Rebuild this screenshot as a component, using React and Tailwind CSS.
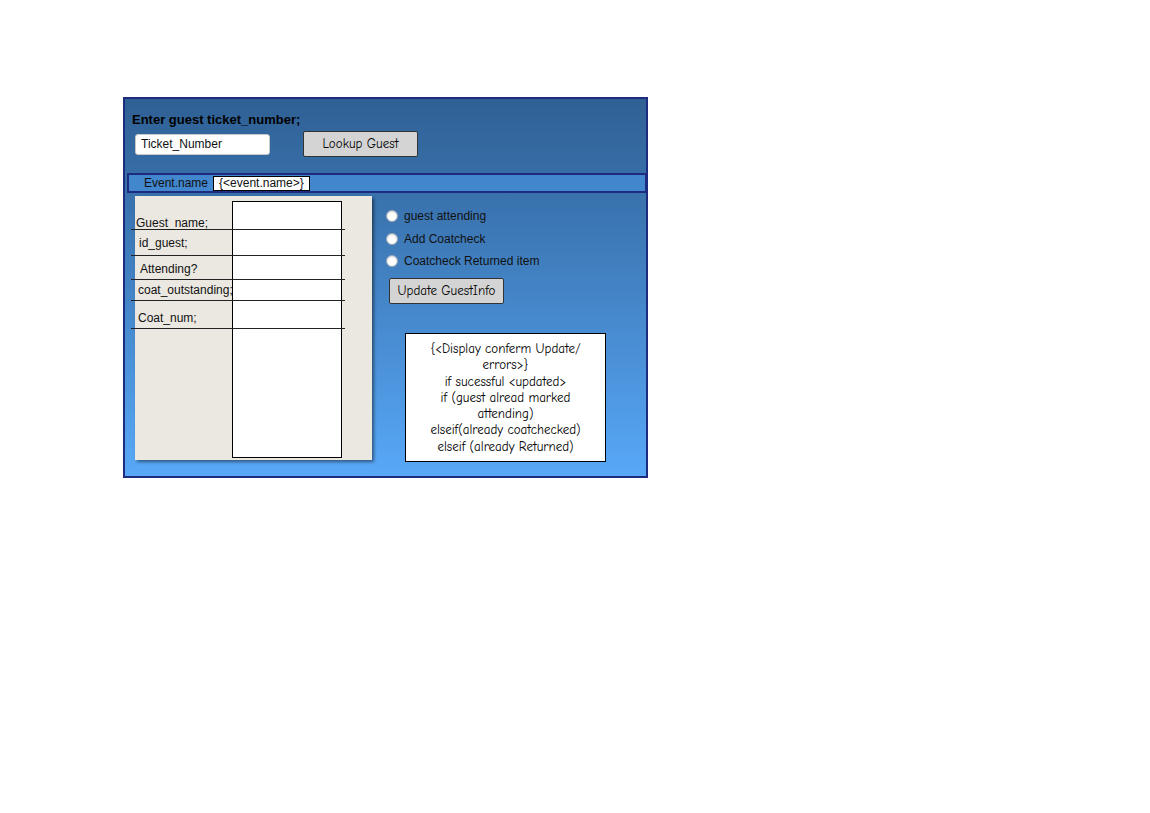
import React from "react";

const comic = "font-['Comic_Sans_MS','Comic_Neue','Lato',sans-serif]";
const arial = "font-['Liberation_Sans',Arial,sans-serif]";

function Row({ label, h, pt, pl, first }) {
  return (
    <div className={`flex w-[214px] -ml-[4px] border-b border-[#222] ${h}`}>
      <div className={`w-[101px] ${pt} ${pl} text-[12px] leading-[14px] text-[#111] whitespace-nowrap`}>{label}</div>
      <div className={`w-[110px] bg-white border-x border-black ${first ? "border-t" : ""}`} />
    </div>
  );
}

function Radio({ label }) {
  return (
    <div className="flex items-center h-[16px]">
      <span className="w-[12px] h-[12px] rounded-full bg-white border border-[#9aa7b5] shadow-[inset_0_1px_2px_rgba(0,0,0,0.15)]" />
      <span className="ml-[6px] text-[12px] text-[#111]">{label}</span>
    </div>
  );
}

export default function App() {
  return (
    <div className={`w-[1150px] h-[813px] bg-white pl-[123px] pt-[97px] ${arial}`}>
      <div className="w-[525px] h-[381px] border-2 border-[#1d2c7e] bg-gradient-to-b from-[#2f6094] to-[#58a8f8] flex flex-col">
        <div className="pl-[7px] mt-[13px] text-[13px] leading-[16px] font-bold text-black">Enter guest ticket_number;</div>
        <div className="flex items-center mt-[3px] ml-[10px] h-[26px]">
          <div className="w-[135px] h-[21px] bg-white rounded-[3px] border border-[#c8c8c8] flex items-center pl-[5px] text-[12px] text-[#111]">Ticket_Number</div>
          <div className={`ml-[33px] w-[115px] h-[26px] bg-[#d4d4d4] border border-[#333] rounded-[2px] flex items-center justify-center text-[13px] font-medium text-black ${comic}`}>Lookup Guest</div>
        </div>
        <div className="mt-[16px] ml-[2px] -mr-[1px] h-[20px] bg-[#4286cd] border-2 border-[#1d2c7e] flex items-center">
          <span className="ml-[15px] text-[12px] text-[#111]">Event.name</span>
          <span className="ml-[5px] h-[15px] bg-white border border-black px-[5px] text-[12px] leading-[13px] text-[#111]">{"{<event.name>}"}</span>
        </div>
        <div className="flex mt-[3px]">
          <div className="ml-[10px] w-[237px] h-[264px] bg-[#ebe8e2] shadow-[2px_2px_3px_rgba(0,0,0,0.45)] pt-[5px] flex flex-col">
            <Row label="Guest_name;" h="h-[29px]" pt="pt-[15px]" pl="pl-[5px]" first />
            <Row label="id_guest;" h="h-[26px]" pt="pt-[6px]" pl="pl-[8px]" />
            <Row label="Attending?" h="h-[24px]" pt="pt-[6px]" pl="pl-[9px]" />
            <Row label="coat_outstanding;" h="h-[21px]" pt="pt-[3px]" pl="pl-[7px]" />
            <Row label="Coat_num;" h="h-[28px]" pt="pt-[10px]" pl="pl-[7px]" />
            <div className="ml-[97px] w-[110px] h-[129px] bg-white border-x border-b border-black" />
          </div>
          <div className="ml-[14px] pt-[12px] flex flex-col">
            <Radio label="guest attending" />
            <div className="mt-[7px]"><Radio label="Add Coatcheck" /></div>
            <div className="mt-[6px]"><Radio label="Coatcheck Returned item" /></div>
            <div className={`mt-[9px] ml-[3px] w-[115px] h-[26px] bg-[#d4d4d4] border border-[#333] rounded-[2px] flex items-center justify-center text-[13px] font-medium text-black ${comic}`}>Update GuestInfo</div>
            <div className={`mt-[29px] ml-[19px] w-[201px] h-[129px] bg-white border border-black pt-[7px] text-center text-[13px] font-medium leading-[16.3px] text-black ${comic}`}>
              {"{<Display conferm Update/"}<br />
              {"errors>}"}<br />
              {"if sucessful <updated>"}<br />
              {"if (guest alread marked"}<br />
              {"attending)"}<br />
              {"elseif(already coatchecked)"}<br />
              {"elseif (already Returned)"}
            </div>
          </div>
        </div>
      </div>
    </div>
  );
}
